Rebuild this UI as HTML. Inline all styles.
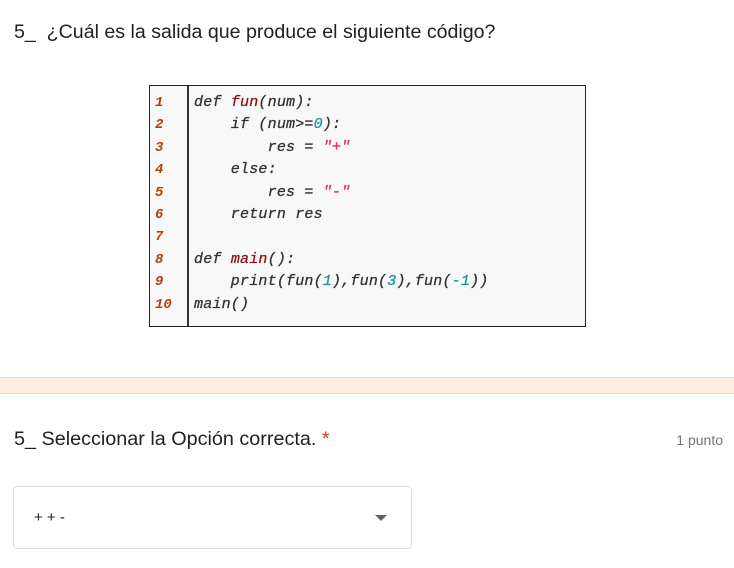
<!DOCTYPE html>
<html><head><meta charset="utf-8"><style>
body{margin:0;width:734px;height:568px;background:#fff;position:relative;overflow:hidden;font-family:"Liberation Sans",Arial,sans-serif;color:#202124}
.t1{position:absolute;left:14px;top:21px;font-size:19.6px}
.code{position:absolute;left:149px;top:85px;width:435px;height:240px;border:1px solid #222;background:#f8f8f8}
.gut{position:absolute;left:0;top:0;width:37px;height:240px;border-right:2px solid #333;background:#f8f8f8}
.ln,.cl{position:absolute;font-family:"Liberation Mono",monospace;font-style:italic;font-weight:bold;font-size:14px;line-height:22.4px;white-space:pre}
.ln{left:5px;top:6px;color:#b5400c}
.cl{left:44px;top:6px;color:#333;font-size:15px;font-weight:normal;letter-spacing:0.2px;-webkit-text-stroke:0.3px #333}
.f{color:#8b1414;-webkit-text-stroke:0.3px #8b1414}.n{color:#1a9a9a;-webkit-text-stroke:0.3px #1a9a9a}.s{color:#e0306a;-webkit-text-stroke:0.3px #e0306a}
.band{position:absolute;left:0;top:377px;width:734px;height:15px;background:#fdefe0;border-top:1px solid #e0e0e0;border-bottom:1px solid #e0e0e0}
.t2{position:absolute;left:14px;top:428px;font-size:19.8px}
.t2 span{color:#d93025}
.pt{position:absolute;right:11px;top:432px;font-size:14px;color:#70757a}
.dd{position:absolute;left:13px;top:486px;width:397px;height:61px;border:1px solid #dadce0;border-radius:4px}
.dd .v{position:absolute;left:20px;top:22px;font-size:15px}
.dd .a{position:absolute;left:361px;top:28px;width:0;height:0;border-left:6px solid transparent;border-right:6px solid transparent;border-top:6px solid #5f6368}
</style></head><body>
<div class="t1">5_&nbsp; ¿Cuál es la salida que produce el siguiente código?</div>
<div class="code"><div class="gut"></div>
<div class="ln">1
2
3
4
5
6
7
8
9
10</div>
<div class="cl">def <span class="f">fun</span>(num):
    if (num&gt;=<span class="n">0</span>):
        res = <span class="s">"+"</span>
    else:
        res = <span class="s">"-"</span>
    return res

def <span class="f">main</span>():
    print(fun(<span class="n">1</span>),fun(<span class="n">3</span>),fun(<span class="n">-1</span>))
main()</div></div>
<div class="band"></div>
<div class="t2">5_ Seleccionar la Opción correcta. <span>*</span></div>
<div class="pt">1 punto</div>
<div class="dd"><div class="v">+ + -</div><div class="a"></div></div>
</body></html>
